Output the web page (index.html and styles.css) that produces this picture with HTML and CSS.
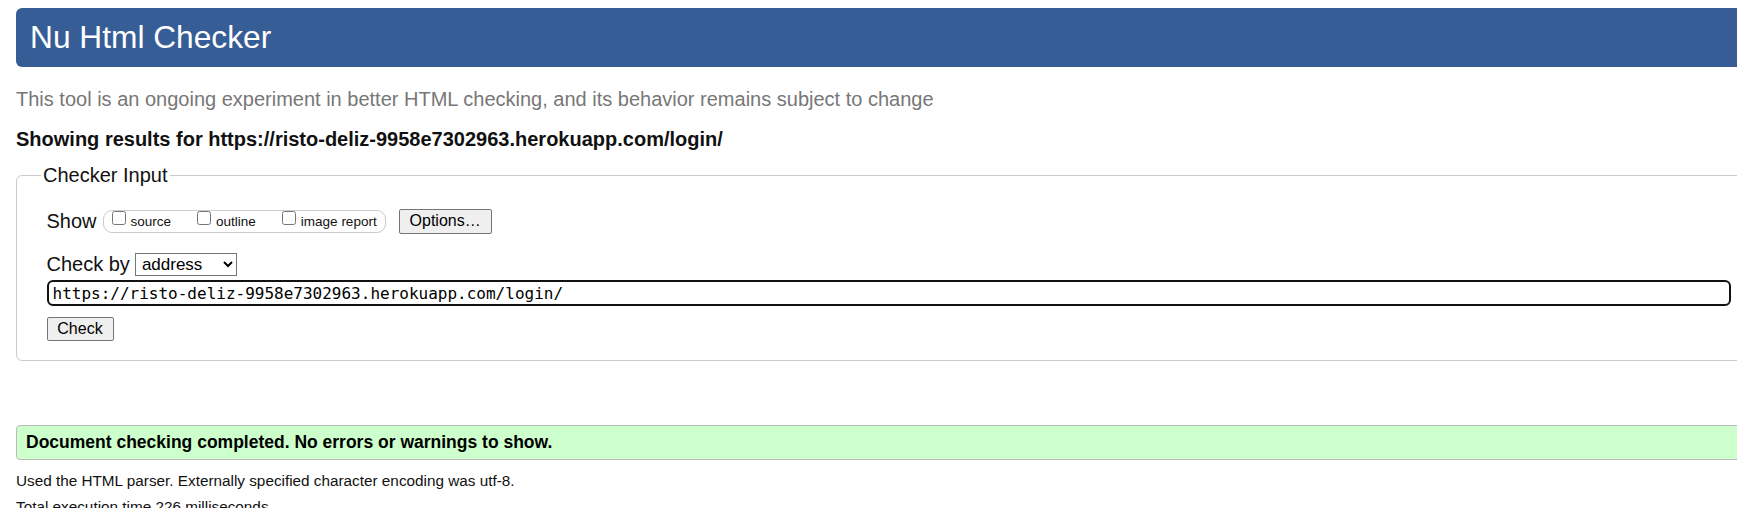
FILE: index.html
```html
<!DOCTYPE html>
<html lang="en">
<head>
<meta charset="utf-8">
<title>Nu Html Checker</title>
<link rel="stylesheet" href="styles.css">
</head>
<body>
<div class="page">
  <h1 class="title">Nu Html Checker</h1>
  <p class="tagline">This tool is an ongoing experiment in better HTML checking, and its behavior remains subject to change</p>
  <p class="showing">Showing results for https://risto-deliz-9958e7302963.herokuapp.com/login/</p>
  <fieldset class="checker">
    <legend class="legend">Checker Input</legend>
    <div class="inner">
      <div class="show-row">
        <span class="show-label">Show</span>
        <span class="opts">
          <label class="opt"><input type="checkbox" class="cb"><span class="opt-text">source</span></label>
          <label class="opt"><input type="checkbox" class="cb"><span class="opt-text">outline</span></label>
          <label class="opt"><input type="checkbox" class="cb"><span class="opt-text">image report</span></label>
        </span>
        <button class="btn btn-options" type="button">Options…</button>
      </div>
      <div class="by-row">
        <label class="by-label">Check by</label>
        <select class="by-select"><option>address</option></select>
      </div>
      <input class="url" type="text" value="https://risto-deliz-9958e7302963.herokuapp.com/login/">
      <div class="check-row">
        <button class="btn btn-check" type="submit">Check</button>
      </div>
    </div>
  </fieldset>
  <div class="success">Document checking completed. No errors or warnings to show.</div>
  <p class="details">Used the HTML parser. Externally specified character encoding was utf-8.</p>
  <p class="details details-time">Total execution time 226 milliseconds.</p>
</div>
</body>
</html>
```

FILE: styles.css
```css
html, body {
  margin: 0;
  padding: 0;
  overflow: hidden;
  background: #fff;
}
body {
  font-family: "Liberation Sans", Arial, sans-serif;
  color: #111;
}
.page {
  width: 1900px;
  padding: 8px 0 0 16px;
}
.title {
  margin: 0;
  height: 59px;
  display: flex;
  align-items: center;
  padding-left: 14px;
  background: #365d95;
  color: #fff;
  font-size: 31.7px;
  font-weight: normal;
  border-radius: 6px;
}
.tagline {
  margin: 20.6px 0 0;
  font-size: 20px;
  line-height: 23px;
  color: #777;
}
.showing {
  margin: 17px 0 0;
  font-size: 20px;
  line-height: 23px;
  font-weight: bold;
}
.checker {
  margin: 13.4px 0 0;
  padding: 0 0 19px 0;
  border: 1px solid #ccc;
  border-radius: 6px;
  min-width: 0;
}
.legend {
  margin-left: 24px;
  padding: 0 2px;
  font-size: 20px;
  line-height: 23px;
}
.inner {
  padding: 22px 0 0 29.5px;
}
.show-row {
  display: flex;
  align-items: center;
  height: 25px;
}
.show-label {
  font-size: 20px;
  margin-right: 6px;
}
.opts {
  display: flex;
  align-items: flex-start;
  height: 23px;
  box-sizing: border-box;
  border: 1px solid #ccc;
  border-radius: 9px;
  padding: 0 8px;
  gap: 26px;
}
.opt {
  display: flex;
  align-items: flex-start;
  gap: 5px;
  font-size: 13.5px;
}
.cb {
  width: 14px;
  height: 14px;
  margin: 0;
}
.opt-text {
  margin-top: 3px;
  line-height: 15.5px;
}
.btn {
  font-family: "Liberation Sans", Arial, sans-serif;
  font-size: 16px;
  color: #000;
  background: #efefef;
  border: 1px solid #767676;
  border-radius: 2px;
  box-sizing: border-box;
  padding: 0;
}
.btn-options {
  margin-left: 13px;
  width: 93px;
  height: 25px;
}
.by-row {
  display: flex;
  align-items: center;
  height: 23px;
  margin-top: 19.5px;
}
.by-label {
  font-size: 20px;
  margin-right: 5px;
}
.by-select {
  width: 102px;
  height: 23px;
  font-family: "Liberation Sans", Arial, sans-serif;
  font-size: 17px;
  border: 1px solid #767676;
  border-radius: 0;
  background: #fff;
  color: #000;
  padding: 0 2px;
}
.url {
  display: block;
  margin: 3.5px 0 0 0;
  width: 1684px;
  height: 26.5px;
  box-sizing: border-box;
  border: 2px solid #111;
  border-radius: 6px;
  padding: 0 0 0 4px;
  font-family: "DejaVu Sans Mono", "Liberation Mono", monospace;
  font-size: 16px;
  color: #000;
  outline: none;
}
.check-row {
  margin-top: 10.5px;
  display: flex;
}
.btn-check {
  width: 67px;
  height: 24.5px;
}
.success {
  margin-top: 63.3px;
  height: 35.4px;
  box-sizing: border-box;
  display: flex;
  align-items: center;
  padding-left: 9px;
  background: #ccffcc;
  border: 1px solid #bbb;
  border-radius: 4px;
  font-size: 17.5px;
  font-weight: bold;
  color: #000;
}
.details {
  margin: 0;
  font-size: 15.3px;
  line-height: 23.2px;
}
.success + .details {
  margin-top: 8.4px;
}
.details-time {
  margin-top: 3.2px;
}
```
